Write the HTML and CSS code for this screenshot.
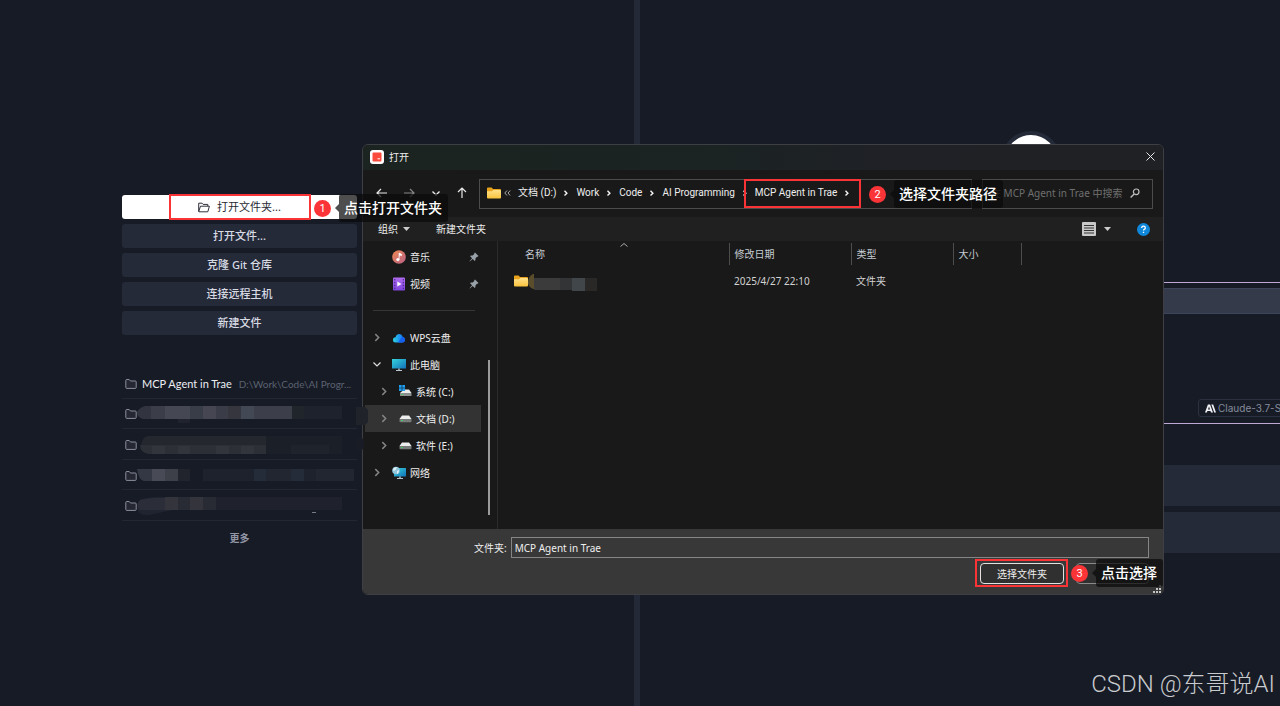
FILE: index.html
```html
<!DOCTYPE html>
<html lang="zh-CN">
<head>
<meta charset="utf-8">
<title>打开文件夹</title>
<link rel="stylesheet" href="styles.css">
</head>
<body>
<svg class="defs" width="0" height="0" aria-hidden="true">
  <defs>
    <linearGradient id="gFolder" x1="0" y1="0" x2="0" y2="1"><stop offset="0" stop-color="#ffe08a"/><stop offset="1" stop-color="#f9c33c"/></linearGradient>
    <linearGradient id="gMusic" x1="0" y1="0" x2="1" y2="1"><stop offset="0" stop-color="#f08a52"/><stop offset="1" stop-color="#b86088"/></linearGradient>
    <linearGradient id="gVideo" x1="0" y1="0" x2="0" y2="1"><stop offset="0" stop-color="#b06cf0"/><stop offset="1" stop-color="#7f45dc"/></linearGradient>
    <linearGradient id="gScreen" x1="0" y1="0" x2="1" y2="1"><stop offset="0" stop-color="#35d3dc"/><stop offset="1" stop-color="#1272b8"/></linearGradient>
    <linearGradient id="gCloud" x1="0" y1="0" x2="1" y2="0"><stop offset="0" stop-color="#2fd3dd"/><stop offset="0.6" stop-color="#1c8df5"/><stop offset="1" stop-color="#1763f0"/></linearGradient>
    <symbol id="folder" viewBox="0 0 14 12"><path d="M0 1.5Q0 .5 1 .5h3.6L6 2h7q1 0 1 1v3H0z" fill="#e9a21c"/><path d="M0 4.2h5L6.4 3H13q1 0 1 1v6.5q0 1-1 1H1q-1 0-1-1z" fill="url(#gFolder)"/></symbol>
    <symbol id="folderLine" viewBox="0 0 12 12"><path d="M.8 9.5V2.4q0-.9.9-.9h2.5L5.500 3h4.800q.9 0 .9.9v5.600q0 .9-.9.9H1.700q-.9 0-.9-.9z" fill="#252733" stroke="#8b8d9c"/></symbol>
    <symbol id="right" viewBox="0 0 6 8"><path d="M1.5 1l3 3-3 3" fill="none" stroke="currentColor" stroke-width="1.3"/></symbol>
    <symbol id="crumb" viewBox="0 0 6 8"><path d="M1.5 1.800L3.900 4.200 1.500 6.600" fill="none" stroke="#f4f4f4" stroke-width="1.400"/></symbol>
    <symbol id="pin" viewBox="0 0 10 10"><path d="M6 .5L9.5 4l-.8.8-.7-.1-1.6 1.7.1 1.7-.8.8-2-2L.8 9.5.5 9.200 3.100 6.300l-2-2 .8-.8 1.700.1L5.300 2l-.1-.7z" fill="#98a0a8"/></symbol>
    <symbol id="drive" viewBox="0 0 12 8"><path d="M2.500.5h7L12 4H0z" fill="#ececec"/><path d="M0 4h12v2.500q0 .8-.8.8H.8Q0 7.300 0 6.500z" fill="#777c7b"/><path d="M1.500 5h1.800v1H1.500z" fill="#45d060"/></symbol>
  </defs>
</svg>

<main class="app">
  <section class="start">
    <div class="actions">
      <button class="action primary"><svg width="12" height="11" viewBox="0 0 12 11"><path d="M.7 9.500V1.200h3.400l1 1.200h4.700v1.800M.7 9.500l1.800-5.300h8.900L9.800 9.800H.9z" fill="none" stroke="#30323c"/></svg>打开文件夹...</button>
      <button class="action">打开文件...</button>
      <button class="action">克隆 Git 仓库</button>
      <button class="action">连接远程主机</button>
      <button class="action">新建文件</button>
    </div>
    <ul class="recent">
      <li><svg class="fi"><use href="#folderLine"/></svg><span class="name">MCP Agent in Trae</span><span class="path">D:\Work\Code\AI Progr...</span></li>
      <li><svg class="fi"><use href="#folderLine"/></svg>
        <svg class="mosaic" width="218" height="18" viewBox="0 0 218 18"><path d="M8 1h8v13H6Q0 12 0 8t8-7z" fill="#32353f"/><path d="M14 1h14v13H14z" fill="#3b3e49"/><path d="M28 1h25v13H28z" fill="#454752"/><path d="M53 1h13v13H53z" fill="#383d48"/><path d="M66 1h13v13H66z" fill="#454651"/><path d="M79 1h12v13H79z" fill="#3a3d48"/><path d="M91 1h13v13H91z" fill="#35363e"/><path d="M104 1h13v13h-13z" fill="#434954"/><path d="M117 1h38v13h-38z" fill="#3c3f4a"/><path d="M155 1h12v13h-12z" fill="#20242b"/><path d="M167 1h38v13h-38z" fill="#1e222d"/><path d="M41 14h12v4H41z" fill="#20232d"/></svg></li>
      <li><svg class="fi"><use href="#folderLine"/></svg>
        <svg class="mosaic" width="218" height="18" viewBox="0 0 218 18"><path d="M11 0h118v9H4Q6 0 11 0z" fill="#25272f"/><path d="M3 9h126v9H12Q3 17 3 9z" fill="#2d2f37"/><path d="M15 10h13v8H15zM41 10h12v8H41zM79 10h13v8H79zM104 10h13v8h-13z" fill="#33353d"/><path d="M129 0h76v18h-76z" fill="#1b1f28"/><path d="M154 9h38v9h-38z" fill="#1f232b"/></svg></li>
      <li><svg class="fi"><use href="#folderLine"/></svg>
        <svg class="mosaic" width="218" height="13" viewBox="0 0 218 13"><path d="M0 0h15v12H7Q2 12 0 0z" fill="#343844"/><path d="M15 0h13v12H15z" fill="#484a55"/><path d="M28 0h13v12H28z" fill="#3d3f49"/><path d="M41 0h12v12H41z" fill="#22242d"/><path d="M66 0h151v12H66z" fill="#1d222d"/><path d="M117 0h12v12h-12zM154 0h13v12h-13z" fill="#242c39"/><path d="M129 0h25v12h-25zM179 0h38v12h-38z" fill="#212631"/></svg></li>
      <li><svg class="fi"><use href="#folderLine"/></svg>
        <svg class="mosaic" width="218" height="20" viewBox="0 0 218 20"><path d="M4 3Q12 1 20 1h185v13H36L12 19q-11 1-12-7 0-7 4-9z" fill="#202330"/><path d="M3 4l12-2h26v12H3q-5-4 0-10z" fill="#2b2d39"/><path d="M28 1h13v13H28zM53 1h13v13H53z" fill="#34343d"/><path d="M41 1h12v13H41zM66 1h13v13H66z" fill="#292b34"/><path d="M79 1h126v13H79z" fill="#1f222c"/><path d="M175 16h4v1h-4z" fill="#777984"/></svg></li>
    </ul>
    <button class="more">更多</button>
  </section>

  <section class="chat">
    <div class="chat-inner">
      <div class="avatar"></div>
      <div class="composer">
        <div class="context"></div>
        <button class="model"><svg width="11" height="9" viewBox="0 0 11 9"><path d="M0 8.500L2.900.5h2.200L8 8.500H6L5.500 7H2.400l-.5 1.500zM3 5.400h2L4 2.500zM6.300.5h1.900l2.800 8H9.200z" fill="#f0f0f4" fill-rule="evenodd"/></svg>Claude-3.7-So</button>
      </div>
      <div class="tip"></div>
      <div class="tip"></div>
    </div>
  </section>
</main>

<div class="dialog" role="dialog" aria-label="打开">
  <header class="titlebar">
    <svg width="14" height="14" viewBox="0 0 14 14"><rect width="14" height="14" rx="3" fill="#fff"/><rect x="2.500" y="2.500" width="9" height="9" rx="1" fill="#fb4b3c"/><path d="M7.500 8.800h2.500" stroke="#fff"/></svg>
    <span>打开</span>
    <button class="close" aria-label="关闭"><svg width="9" height="9" viewBox="0 0 9 9"><path d="M.5.5l8 8M8.500.5l-8 8" stroke="#e6e6e6" fill="none"/></svg></button>
  </header>
  <nav class="navbar">
    <div class="arrows">
      <button aria-label="后退"><svg width="11" height="10" viewBox="0 0 11 10"><path d="M11 5H1M5 1L1 5l4 4" fill="none" stroke="#e8e8e8" stroke-width="1.200"/></svg></button>
      <button aria-label="前进"><svg width="11" height="10" viewBox="0 0 11 10"><path d="M0 5h10M6 1l4 4-4 4" fill="none" stroke="#858585" stroke-width="1.200"/></svg></button>
      <button aria-label="最近"><svg width="8" height="10" viewBox="0 0 8 10"><path d="M.5 3.500L4 7l3.500-3.500" fill="none" stroke="#e8e8e8" stroke-width="1.400"/></svg></button>
      <button aria-label="上移"><svg width="10" height="11" viewBox="0 0 10 11"><path d="M5 11V1M1 5l4-4 4 4" fill="none" stroke="#e8e8e8" stroke-width="1.200"/></svg></button>
    </div>
    <div class="address">
      <svg class="folder"><use href="#folder"/></svg>
      <svg width="7" height="6" viewBox="0 0 7 6"><path d="M3 .5L.8 3 3 5.500M6.200.5L4 3l2.200 2.500" fill="none" stroke="#aaa"/></svg>
      <a href="#">文档 (D:)</a><svg class="sep"><use href="#crumb"/></svg>
      <a href="#">Work</a><svg class="sep"><use href="#crumb"/></svg>
      <a href="#">Code</a><svg class="sep"><use href="#crumb"/></svg>
      <a href="#">AI Programming</a><svg class="sep"><use href="#crumb"/></svg>
      <a href="#">MCP Agent in Trae</a><svg class="sep"><use href="#crumb"/></svg>
    </div>
    <label class="search">
      <input type="text" aria-label="搜索" placeholder="在 MCP Agent in Trae 中搜索">
      <svg width="10" height="10" viewBox="0 0 10 10"><circle cx="6.200" cy="3.800" r="2.800" fill="none" stroke="#bdbdbd" stroke-width="1.200"/><path d="M4.200 5.900L.6 9.400" stroke="#bdbdbd" stroke-width="1.400"/></svg>
    </label>
  </nav>
  <div class="toolbar">
    <button>组织<svg width="7" height="4" viewBox="0 0 7 4"><path d="M0 0h7L3.500 4z" fill="#ccc"/></svg></button>
    <button>新建文件夹</button>
    <button class="view" aria-label="视图"><svg width="14" height="14" viewBox="0 0 14 14"><rect width="14" height="14" rx="1" fill="#c8c8c8"/><path d="M2 3.500h10M2 6h10M2 8.500h10M2 11h10" stroke="#333"/></svg><svg width="7" height="4" viewBox="0 0 7 4"><path d="M0 0h7L3.500 4z" fill="#ccc"/></svg></button>
    <button class="help" aria-label="帮助"><svg width="13" height="13" viewBox="0 0 13 13"><circle cx="6.500" cy="6.500" r="6.500" fill="#0f88dc"/><path d="M4.700 5q0-1.800 1.800-1.800T8.300 4.900q0 1-1.100 1.500-.7.300-.7 1.200M6.500 8.700v1.300" fill="none" stroke="#fff" stroke-width="1.300"/></svg></button>
  </div>
  <div class="browser">
    <div class="tree">
      <ul>
        <li class="top"><svg width="14" height="14" viewBox="0 0 14 14"><circle cx="7" cy="7" r="6.800" fill="url(#gMusic)"/><path d="M7 9.400V3l2.600 1.300v1.400L7.700 4.900" fill="#fff" stroke="#fff" stroke-width=".6"/><circle cx="5.900" cy="9.500" r="1.600" fill="#fff"/></svg><span>音乐</span><svg class="pin"><use href="#pin"/></svg></li>
        <li class="top"><svg width="14" height="14" viewBox="0 0 14 14"><rect x="1" y=".5" width="12" height="13" rx="1" fill="url(#gVideo)"/><path d="M2.800 2v10M11.300 2v10" stroke="#3e1c80" stroke-dasharray="1.400 1.500"/><path d="M5.300 4.500v5L9.500 7z" fill="#fff"/></svg><span>视频</span><svg class="pin"><use href="#pin"/></svg></li>
        <li class="rule"></li>
        <li><svg class="chev"><use href="#right"/></svg><svg width="14" height="14" viewBox="0 0 14 14"><path d="M3.500 11.500Q1 11.500 1 9t2.600-2.700Q4.500 3 7.300 3q2.600 0 3.400 2.800 2.300.6 2.300 3 0 2.700-2.800 2.700z" fill="url(#gCloud)"/><path d="M6 11.500L9.200 7q1-1.200 2.300-.8Q13 7 13 8.800q0 2.700-2.800 2.700z" fill="#1560ec"/></svg><span>WPS云盘</span></li>
        <li><svg class="chev open" viewBox="0 0 8 8"><path d="M0.500 2L4 5.500 7.500 2" fill="none" stroke="#ddd" stroke-width="1.200"/></svg><svg width="14" height="14" viewBox="0 0 14 14"><path d="M0 1h14v9.500H0z" fill="url(#gScreen)"/><path d="M6.300 10.500h1.400V12H10v1H4v-1h2.300z" fill="#b9c5cc"/></svg><span>此电脑</span></li>
        <li class="sub"><svg class="chev"><use href="#right"/></svg><svg width="13" height="13" viewBox="0 0 13 13"><path d="M5 4.500h5L12.500 8H1z" fill="#ececec"/><path d="M1 8h11.500v3H1z" fill="#8b8f8e"/><path d="M2.500 9h1.800v1H2.500z" fill="#45d060"/><path d="M0 0h2.700v2.700H0zM3.300 0H6v2.700H3.300zM0 3.300h2.700V6H0zM3.300 3.300H6V6H3.300z" fill="#1c9df0"/></svg><span>系统 (C:)</span></li>
        <li class="sub selected"><svg class="chev"><use href="#right"/></svg><svg width="13" height="8"><use href="#drive"/></svg><span>文档 (D:)</span></li>
        <li class="sub"><svg class="chev"><use href="#right"/></svg><svg width="13" height="8"><use href="#drive"/></svg><span>软件 (E:)</span></li>
        <li><svg class="chev"><use href="#right"/></svg><svg width="14" height="14" viewBox="0 0 14 14"><path d="M2 2h12v8.500H2z" fill="url(#gScreen)"/><path d="M7.300 10.500h1.400V12H11v1H5v-1h2.300z" fill="#b9c5cc"/><circle cx="4" cy="4.500" r="3.800" fill="#8fc6dc"/><path d="M1 3q2-2.500 4-1.500L3.500 4 1.500 5zM5 5l2-1q0 3-2 4z" fill="#dff0f5"/></svg><span>网络</span></li>
      </ul>
      <div class="scroll"><div class="thumb"></div></div>
    </div>
    <div class="files">
      <svg class="sort" width="8" height="4" viewBox="0 0 8 4"><path d="M.5 3.500L4 .5l3.500 3" fill="none" stroke="#aaa"/></svg>
      <table>
        <thead><tr><th class="c-name">名称</th><th class="c-date">修改日期</th><th class="c-type">类型</th><th class="c-size">大小</th><th class="c-rest"></th></tr></thead>
        <tbody><tr><td><div class="entry"><svg class="folder"><use href="#folder"/></svg><svg width="70" height="22" viewBox="0 0 70 22"><path d="M0 11q1-5 5-7h1v15H5q-4-2-5-5z" fill="#5a4d2c"/><path d="M6 8h26v12H6z" fill="#3b3b3b"/><path d="M32 8h12v12H32z" fill="#333435"/><path d="M44 8h13v13H44z" fill="#41464a"/><path d="M57 8h12v13H57z" fill="#2a2727"/></svg></div></td><td>2025/4/27 22:10</td><td>文件夹</td><td></td><td></td></tr></tbody>
      </table>
    </div>
  </div>
  <footer class="footer">
    <div class="field"><label for="folder-name">文件夹:</label><input id="folder-name" type="text" value="MCP Agent in Trae"></div>
    <div class="buttons"><button class="choose">选择文件夹</button><button class="cancel" aria-label="取消"></button></div>
    <svg class="grip" width="8" height="8" viewBox="0 0 8 8"><path d="M6 0h2v2H6zM3 3h2v2H3zM6 3h2v2H6zM0 6h2v2H0zM3 6h2v2H3zM6 6h2v2H6z" fill="#c4c4c4"/></svg>
  </footer>
</div>

<svg class="smudge" width="12" height="48" viewBox="0 0 12 48"><path d="M0 0h9l3 3v12l-3 3H0z" fill="#202329"/><path d="M0 31h6l2 3v6l-2 3H0z" fill="#191c24"/></svg>
<div class="mark mark-1"></div>
<div class="mark mark-2"></div>
<div class="mark mark-3"></div>
<div class="callout callout-1"><span class="num">1</span><span class="bubble">点击打开文件夹</span></div>
<div class="callout callout-2"><span class="num">2</span><span class="bubble">选择文件夹路径</span></div>
<div class="callout callout-3"><span class="num">3</span><span class="bubble">点击选择</span></div>
<div class="watermark">CSDN @东哥说AI</div>
</body>
</html>
```
FILE: styles.css
```css
* { box-sizing: border-box; }

body {
  margin: 0;
  position: relative;
  min-height: 100vh;
  overflow: hidden;
  background: #171b26;
  color: #e4e4e8;
  font: 11px/16px "Noto Sans", "Noto Sans CJK SC", sans-serif;
}

button {
  padding: 0;
  border: 0;
  background: none;
  color: inherit;
  font: inherit;
}

input { font: inherit; color: inherit; min-width: 0; }
ul { margin: 0; padding: 0; list-style: none; }
svg { flex: none; display: block; }
a { color: inherit; text-decoration: none; }
.defs { position: absolute; }

/* Editor */
.app {
  display: grid;
  grid-template-columns: 640px 1fr;
  min-height: 100vh;
}

.start {
  padding: 195px 0 0 122px;
  border-right: 6px solid #242938;
}

.actions {
  display: grid;
  gap: 5px;
  width: 235px;
}

.action {
  display: flex;
  align-items: center;
  justify-content: center;
  gap: 7px;
  height: 24px;
  border-radius: 3px;
  background: #252a39;
  color: #d8dae4;
  font-weight: 500;
}

.primary {
  background: #fff;
  color: #282a33;
  font-weight: 400;
}

.recent {
  display: grid;
  grid-template-columns: minmax(0, 1fr);
  grid-template-rows: repeat(5, 1fr);
  width: 235px;
  height: 153px;
  margin-top: 33px;
}

.recent li {
  display: flex;
  align-items: center;
  padding: 2px 0 0 3px;
  border-bottom: 1px solid #222734;
  font-family: Lato, sans-serif;
}

.fi { width: 12px; height: 12px; }
.name { margin: 0 7px 0 5px; color: #eceef4; white-space: nowrap; }
.path { color: #5b6270; font-size: 10px; white-space: nowrap; }

.more {
  width: 235px;
  margin-top: 9px;
  color: #9296a4;
  font-size: 10px;
  font-weight: 700;
}

.chat { overflow: hidden; }

.chat-inner {
  display: flex;
  flex-direction: column;
  width: 782px;
  padding-top: 131px;
}

.avatar {
  align-self: center;
  width: 60px;
  height: 60px;
  border: 4px solid #252a39;
  border-radius: 50%;
  background: #fff;
}

.composer {
  display: flex;
  flex-direction: column;
  justify-content: space-between;
  height: 142px;
  margin: 91px 0 41px;
  padding: 5px 0 6px;
  border: solid #bda9d3;
  border-width: 1px 0;
}

.context {
  height: 26px;
  border: solid #3b465c;
  border-width: 1px 0;
  background: #353a4b;
}

.model {
  display: flex;
  align-items: center;
  gap: 2px;
  height: 18px;
  margin-left: 558px;
  padding: 0 6px;
  border: 1px solid #2a3040;
  border-radius: 3px;
  color: #858b9b;
  font: 10px/16px Inter, sans-serif;
}

.tip {
  height: 41px;
  margin-bottom: 6px;
  background: #252a39;
}

/* File dialog */
.dialog {
  position: absolute;
  left: 362px;
  top: 144px;
  width: 802px;
  overflow: hidden;
  border: 1px solid #3d3f45;
  border-radius: 6px;
  background: #191919;
  color: #eee;
  font: 10px/14px "Noto Sans", "Noto Sans CJK SC", sans-serif;
}

.titlebar {
  display: flex;
  align-items: center;
  gap: 5px;
  height: 25px;
  padding: 0 8px 2px 7px;
  background: linear-gradient(90deg, #1c2421, #1b2323 45%, #1f2126 65%, #1f2124);
}

.close { margin-left: auto; }

.navbar {
  display: flex;
  align-items: center;
  gap: 10px;
  height: 47px;
  padding: 0 10px 0 13px;
}

.arrows {
  display: flex;
  gap: 17px;
  width: 93px;
  padding-bottom: 2px;
}

.arrows button { display: flex; align-items: center; }

.address,
.search {
  display: flex;
  align-items: center;
  height: 30px;
  padding-bottom: 2px;
  border: 1px solid #4b4b4b;
}

.address {
  flex: 1;
  gap: 7px;
  padding-left: 7px;
  font-family: Roboto, "Noto Sans CJK SC", sans-serif;
  white-space: nowrap;
}

.folder { width: 14px; height: 12px; }
.address .folder { margin-right: -4px; }
.sep { width: 6px; height: 8px; }

.search {
  width: 171px;
  padding-left: 8px;
  padding-right: 12px;
}

.search input {
  flex: 1;
  padding: 0;
  border: 0;
  background: none;
}

.search input::placeholder { color: #6f6f6f; }

.toolbar {
  display: flex;
  align-items: center;
  gap: 26px;
  height: 24px;
  padding: 0 13px 0 15px;
  background: #202020;
}

.toolbar button { display: flex; align-items: center; gap: 5px; }
.toolbar .view { gap: 8px; margin-left: auto; }

.browser {
  display: grid;
  grid-template-columns: 135px 1fr;
  height: 288px;
}

.tree {
  display: flex;
  padding-top: 2px;
  border-right: 1px solid #2b2b2b;
}

.tree ul { width: 118px; }

.tree li {
  display: flex;
  align-items: center;
  gap: 4px;
  height: 27px;
  padding: 0 2px 0 10px;
}

.tree .top { padding-left: 29px; }
.tree .sub { padding-left: 17px; gap: 4px; }
.tree .selected { margin-left: 2px; padding-left: 15px; background: #333; }

.tree .rule::before {
  content: "";
  width: 102px;
  height: 1px;
  background: #363636;
}

.chev { width: 8px; height: 9px; margin-right: 7px; color: #858585; }
.pin { width: 10px; height: 10px; margin-left: auto; }

.scroll { padding: 117px 0 0 7px; }
.thumb { width: 2px; height: 155px; background: #9b9b9b; }

.files { position: relative; padding-top: 2px; }
.sort { position: absolute; left: 122px; top: 2px; }

table {
  width: 100%;
  border-collapse: collapse;
  table-layout: fixed;
}

th, td { padding: 0 0 0 5px; text-align: left; font-weight: 400; }
th { height: 22px; border-right: 1px solid #4d4d4d; color: #c6cbd2; }
td { height: 31px; color: #d2d2d2; }
.c-name { width: 231px; padding-left: 27px; }
.c-date { width: 122px; }
.c-type { width: 102px; }
.c-size { width: 68px; }
.c-rest { border: 0; }
.entry { display: flex; align-items: center; padding-left: 11px; }

.footer {
  position: relative;
  height: 65px;
  padding: 8px 14px 0 111px;
  background: #383838;
}

.field { display: flex; align-items: center; gap: 4px; }

.field input {
  flex: 1;
  height: 21px;
  padding: 0 3px;
  border: 1px solid #858585;
  background: #383838;
}

.buttons {
  display: flex;
  justify-content: flex-end;
  gap: 12px;
  margin-top: 5px;
}

.buttons button {
  height: 21px;
  border: 1px solid #8b8b8b;
  border-radius: 4px;
  background: #303030;
}

.buttons .choose { width: 84px; border-color: #e2e2e2; }
.buttons .cancel { width: 73px; }
.grip { position: absolute; right: 2px; bottom: 1px; }

/* Step annotations */
.smudge { position: absolute; left: 356px; top: 407px; }
.mark { position: absolute; border: 2px solid #f93336; }
.mark-1 { left: 169px; top: 194px; width: 142px; height: 26px; }
.mark-2 { left: 744px; top: 179px; width: 117px; height: 29px; }
.mark-3 { left: 975px; top: 559px; width: 93px; height: 28px; }

.callout {
  position: absolute;
  display: flex;
  align-items: center;
  gap: 8px;
}

.callout-1 { left: 314px; top: 194px; }
.callout-2 { left: 869px; top: 180px; }
.callout-3 { left: 1071px; top: 559px; }

.num {
  width: 17px;
  height: 17px;
  border-radius: 50%;
  background: #fb3438;
  color: #fff;
  font: 11px/17px Roboto, sans-serif;
  text-align: center;
}

.bubble {
  position: relative;
  padding: 0 6px 2px 5px;
  border-radius: 3px;
  background: rgba(10, 10, 10, 0.72);
  color: #fff;
  font: 500 14px/26px "Noto Sans CJK SC", sans-serif;
  white-space: nowrap;
}

.bubble::before {
  content: "";
  position: absolute;
  left: -4px;
  top: 10px;
  border: solid transparent;
  border-width: 4px 4px 4px 0;
  border-right-color: rgba(10, 10, 10, 0.72);
}

.watermark {
  position: absolute;
  right: 5px;
  bottom: 4px;
  color: #c8cacd;
  font: 300 24px/36px Roboto, "Noto Sans CJK SC", sans-serif;
}
```
